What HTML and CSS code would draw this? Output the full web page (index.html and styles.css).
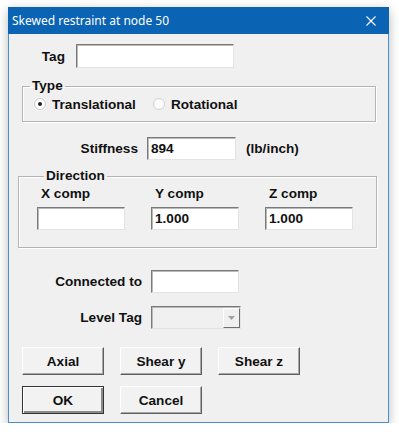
FILE: index.html
```html
<!DOCTYPE html>
<html>
<head>
<meta charset="utf-8">
<link rel="stylesheet" href="styles.css">
</head>
<body>
<div class="window">
  <div class="titlebar">
    <span class="title">Skewed restraint at node 50</span>
    <svg class="close" width="10" height="10" viewBox="0 0 10 10"><path d="M0.5 0.5 L9.5 9.5 M9.5 0.5 L0.5 9.5" stroke="#fff" stroke-width="1.1" fill="none"/></svg>
  </div>
  <div class="body">
    <div class="row row-tag">
      <span class="lbl lbl-tag">Tag</span>
      <span class="input input-tag"></span>
    </div>
    <fieldset class="group group-type">
      <legend>Type</legend>
      <div class="radios">
        <span class="radio-item first"><span class="radio checked"></span>Translational</span>
        <span class="radio-item"><span class="radio"></span>Rotational</span>
      </div>
    </fieldset>
    <div class="row row-stiff">
      <span class="lbl lbl-wide">Stiffness</span>
      <span class="input input-stiff">894</span>
      <span class="unit">(lb/inch)</span>
    </div>
    <fieldset class="group group-dir">
      <legend>Direction</legend>
      <div class="comps">
        <div class="comp"><span class="comp-lbl">X comp</span><span class="input input-comp"></span></div>
        <div class="comp"><span class="comp-lbl">Y comp</span><span class="input input-comp">1.000</span></div>
        <div class="comp"><span class="comp-lbl">Z comp</span><span class="input input-comp">1.000</span></div>
      </div>
    </fieldset>
    <div class="row row-conn">
      <span class="lbl lbl-conn">Connected to</span>
      <span class="input input-conn"></span>
    </div>
    <div class="row row-level">
      <span class="lbl lbl-conn">Level Tag</span>
      <span class="combo"><span class="combo-field"></span><span class="combo-btn"><svg width="7" height="4" viewBox="0 0 7 4"><path d="M0 0 H7 L3.5 4 Z" fill="#a0a0a0"/></svg></span></span>
    </div>
    <div class="btnrow btnrow-1">
      <span class="btn">Axial</span>
      <span class="btn">Shear y</span>
      <span class="btn">Shear z</span>
    </div>
    <div class="btnrow btnrow-2">
      <span class="btn btn-default">OK</span>
      <span class="btn">Cancel</span>
    </div>
  </div>
</div>
</body>
</html>
```

FILE: styles.css
```css
html, body {
  margin: 0;
  padding: 0;
  background: #ffffff;
}
body {
  padding: 7px 0 0 8px;
  font-family: "Liberation Sans", Arial, sans-serif;
  font-weight: bold;
  font-size: 13.6px;
  color: #111;
}
.window {
  width: 381px;
  box-sizing: border-box;
  border: 1px solid #4a8fd2;
  border-top: none;
  background: #f0f0f0;
  box-shadow: 0 3px 10px rgba(0,0,0,0.28);
}
.titlebar {
  height: 27px;
  margin: 0 -1px;
  background: #0a63b3;
  display: flex;
  align-items: center;
  justify-content: space-between;
}
.title {
  font-family: "Noto Sans", "Open Sans", sans-serif;
  font-weight: normal;
  font-size: 12px;
  color: #fff;
  padding-left: 4px;
}
.close {
  margin-right: 13px;
  margin-top: 1px;
}
.body {
  padding-bottom: 8px;
}
.row {
  display: flex;
  align-items: center;
}
.lbl {
  text-align: right;
  flex: none;
}
.lbl-tag { width: 56px; margin-right: 11px; }
.lbl-wide { width: 129px; margin-right: 9px; }
.lbl-conn { width: 133px; margin-right: 9px; }
.row-tag { margin-top: 10px; }
.input {
  display: block;
  box-sizing: border-box;
  height: 23px;
  background: #fff;
  border-style: solid;
  border-width: 1px;
  border-color: #7a7a7a #e3e3e3 #e3e3e3 #7a7a7a;
  box-shadow: inset 1px 1px 0 #b9b9b9;
  padding: 3px 0 0 3px;
  line-height: 15px;
}
.input-tag { width: 158px; height: 24px; }
.input-stiff { width: 89px; }
.input-conn { width: 88px; }
.input-comp { width: 88px; }
.unit { margin-left: 10px; }
.row-stiff { margin-top: 15px; }

.group {
  margin: 0;
  padding: 0;
  box-sizing: border-box;
  border: 1px solid #b4b4b4;
  box-shadow: inset 1px 1px 0 #fff, 1px 1px 0 #fff;
}
.group legend {
  padding: 0 2px;
  margin-left: 7px;
  line-height: 16px;
}
.group-type {
  margin: 10px 0 0 13px;
  width: 354px;
  padding-bottom: 9px;
}
.radios {
  display: flex;
  align-items: center;
  margin-top: 2px;
  padding-left: 11px;
  height: 16px;
}
.radio-item {
  display: flex;
  align-items: center;
}
.radio-item.first { width: 119px; }
.radio {
  width: 12px;
  height: 12px;
  box-sizing: border-box;
  border-radius: 50%;
  background: #fff;
  border: 1px solid #cfcfcf;
  margin-right: 6px;
  display: flex;
  align-items: center;
  justify-content: center;
}
.radio.checked::after {
  content: "";
  width: 4px;
  height: 4px;
  border-radius: 50%;
  background: #222;
}
.group-dir {
  margin: 8px 0 0 9px;
  width: 359px;
  padding: 0 0 17px 18px;
}
.comps {
  display: grid;
  grid-template-columns: 88px 88px 88px;
  column-gap: 26px;
  margin-top: 2px;
}
.comp {
  display: flex;
  flex-direction: column;
}
.comp-lbl {
  line-height: 16px;
  padding-left: 4px;
  margin-bottom: 5px;
}
.row-conn { margin-top: 22px; }
.row-level { margin-top: 13px; }
.combo {
  display: flex;
  box-sizing: border-box;
  width: 90px;
  height: 23px;
  border-style: solid;
  border-width: 1px;
  border-color: #7a7a7a #e3e3e3 #e3e3e3 #7a7a7a;
  box-shadow: inset 1px 1px 0 #b9b9b9;
  background: #f0f0f0;
}
.combo-field { flex: 1; }
.combo-btn {
  width: 17px;
  box-sizing: border-box;
  margin: 1px 0 0 0;
  border-style: solid;
  border-width: 1px;
  border-color: #fff #6e6e6e #6e6e6e #fff;
  display: flex;
  align-items: center;
  justify-content: center;
}
.btnrow {
  display: flex;
  gap: 16px;
  margin-left: 13px;
}
.btnrow-1 { margin-top: 18px; }
.btnrow-2 { margin-top: 11px; }
.btn {
  box-sizing: border-box;
  width: 82px;
  height: 28px;
  display: flex;
  align-items: center;
  justify-content: center;
  background: #f2f2f2;
  border-style: solid;
  border-width: 1px;
  border-color: #fff #5e5e5e #5e5e5e #fff;
  box-shadow: inset -1px -1px 0 #a8a8a8;
}
.btn-default {
  border: 1px solid #333;
  box-shadow: inset 1px 1px 0 #fff, inset -2px -2px 0 #8a8a8a;
}
```
